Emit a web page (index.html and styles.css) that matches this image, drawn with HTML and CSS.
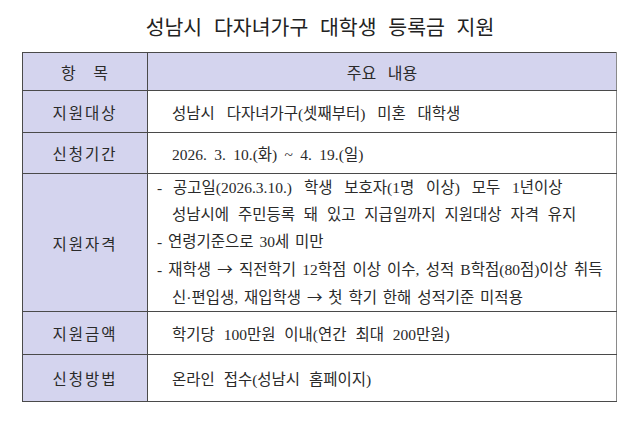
FILE: index.html
```html
<!DOCTYPE html>
<html lang="ko">
<head>
<meta charset="utf-8">
<link rel="stylesheet" href="styles.css">
</head>
<body>
<div class="page">
  <h1 class="title">성남시 다자녀가구 대학생 등록금 지원</h1>
  <table class="info">
    <colgroup><col class="c1"><col class="c2"></colgroup>
    <tr class="r-head">
      <th class="lab hlab">항&nbsp;&nbsp;&nbsp;목</th>
      <th class="head">주요 내용</th>
    </tr>
    <tr class="r1">
      <td class="lab">지원대상</td>
      <td class="val wide">성남시 다자녀가구(셋째부터) 미혼 대학생</td>
    </tr>
    <tr class="r2">
      <td class="lab">신청기간</td>
      <td class="val date">2026. 3. 10.(화) ~ 4. 19.(일)</td>
    </tr>
    <tr class="r3">
      <td class="lab">지원자격</td>
      <td class="val list">
        <div class="item"><span class="dash">-</span> <span class="wide">공고일(2026.3.10.) 학생 보호자(1명 이상) 모두 1년이상</span></div>
        <div class="cont">성남시에 주민등록 돼 있고 지급일까지 지원대상 자격 유지</div>
        <div class="item narrow">- 연령기준으로 30세 미만</div>
        <div class="item tight">- 재학생 <span class="arrow">→</span> 직전학기 12학점 이상 이수, 성적 B학점(80점)이상 취득</div>
        <div class="cont narrow">신·편입생, 재입학생 <span class="arrow">→</span> 첫 학기 한해 성적기준 미적용</div>
      </td>
    </tr>
    <tr class="r4">
      <td class="lab">지원금액</td>
      <td class="val">학기당 100만원 이내(연간 최대 200만원)</td>
    </tr>
    <tr class="r5">
      <td class="lab">신청방법</td>
      <td class="val">온라인 접수(성남시 홈페이지)</td>
    </tr>
  </table>
</div>
</body>
</html>
```
FILE: styles.css
```css
html, body {
  margin: 0;
  padding: 0;
  background: #ffffff;
}
body {
  font-family: "Noto Sans CJK KR", "Noto Sans", sans-serif;
  color: #2a2a2a;
}
.page {
  width: 640px;
  height: 424px;
  padding-top: 14px;
  box-sizing: border-box;
}
.title {
  margin: 0 0 14px 0;
  height: 24px;
  line-height: 24px;
  font-size: 20.5px;
  font-weight: 400;
  text-align: center;
  word-spacing: 6px;
  color: #222;
}
.info {
  margin-left: 22px;
  width: 595px;
  border-collapse: collapse;
  font-size: 15px;
  table-layout: fixed;
}
.c1 { width: 125px; }
.info th, .info td {
  border: 1px solid #4a4a4a;
  padding: 0;
  font-weight: 400;
  vertical-align: middle;
}
.info tr > *:last-child { border-right-color: #8a8a8a; }
.lab {
  background: #d4d4ee;
  text-align: center;
  letter-spacing: 2px;
  font-size: 15.5px;
}
.hlab {
  font-size: 16px;
  letter-spacing: 1px;
}
.head {
  background: #d4d4ee;
  text-align: center;
  font-size: 16px;
  word-spacing: 7px;
}
.val {
  padding-left: 24px !important;
  font-family: "Liberation Serif", "Noto Sans CJK KR", serif;
  font-size: 15.5px;
  word-spacing: 5px;
}
.wide { word-spacing: 8px; }
.date { word-spacing: 3.5px; }
.r-head { height: 38px; }
.r1 { height: 42px; }
.r2 { height: 41px; }
.r3 { height: 136px; }
.r4 { height: 43px; }
.r5 { height: 47px; }
.list {
  padding-left: 9px !important;
  line-height: 27px;
}
.cont { padding-left: 15px; }
.dash { margin-right: 2px; }
.narrow { word-spacing: 2px; }
.tight { word-spacing: 2.3px; }
.arrow {
  font-family: "Noto Sans CJK KR", sans-serif;
}
```
